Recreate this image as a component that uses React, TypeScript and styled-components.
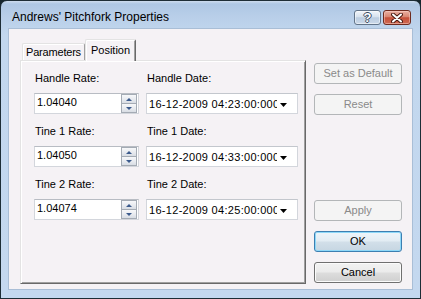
import React from "react";
import styled, { createGlobalStyle, css } from "styled-components";

const GlobalStyle = createGlobalStyle`
  html, body { margin: 0; padding: 0; background: #16262e; }
  body { font-family: "Liberation Sans", Arial, sans-serif; }
  * { box-sizing: border-box; }
`;

const Window = styled.div`
  width: 421px;
  height: 299px;
  border: 1px solid #1d2d36;
  border-radius: 7px 7px 0 0;
  background: linear-gradient(
    180deg,
    #cddcee 0px,
    #aec7e4 3px,
    #b9cfe9 16px,
    #c2d7ee 34px,
    #c4d8ef 100%
  );
  display: flex;
  flex-direction: column;
  overflow: hidden;
`;

const TitleBar = styled.div`
  height: 27px;
  flex: none;
  display: flex;
  align-items: flex-start;
  justify-content: space-between;
  padding: 0 9px 0 11px;
`;

const Title = styled.div`
  margin-top: 9px;
  font-size: 12px;
  line-height: 14px;
  color: #000;
`;

const CaptionButtons = styled.div`
  margin-top: 9px;
  display: flex;
  gap: 2px;
`;

const CaptionButton = styled.div<{ $close?: boolean }>`
  height: 15px;
  width: ${(p) => (p.$close ? 28 : 27)}px;
  border-radius: 3px;
  display: flex;
  align-items: center;
  justify-content: center;
  ${(p) =>
    p.$close
      ? css`
          border: 1px solid #6e2b1f;
          background: linear-gradient(180deg, #eab0a3 0%, #d98672 45%, #c5503a 52%, #cf6a52 100%);
          box-shadow: inset 0 0 0 1px rgba(255, 220, 210, 0.45);
        `
      : css`
          border: 1px solid #627489;
          background: linear-gradient(180deg, #f1f5fa 0%, #d7e2ee 45%, #bccde0 52%, #cbd9ea 100%);
          box-shadow: inset 0 0 0 1px rgba(255, 255, 255, 0.5);
        `}
`;

const HelpGlyph = styled.span`
  font-family: "Liberation Sans", Arial, sans-serif;
  font-weight: bold;
  font-size: 13px;
  line-height: 13px;
  color: #fff;
  text-shadow: 1px 0 #3a4a5d, -1px 0 #3a4a5d, 0 1px #3a4a5d, 0 -1px #3a4a5d;
`;

const Body = styled.div`
  flex: 1;
  display: flex;
  padding: 0 7px 8px 7px;
`;

const Client = styled.div`
  flex: 1;
  display: flex;
  gap: 8px;
  background: #f5f2f5;
  border: 1px solid #a9bed6;
  padding: 9px 10px 5px 11px;
`;

const TabControl = styled.div`
  width: 286px;
  display: flex;
  flex-direction: column;
`;

const TabStrip = styled.div`
  height: 22px;
  flex: none;
  display: flex;
  align-items: flex-end;
  padding-left: 2px;
  position: relative;
  z-index: 1;
`;

const Tab = styled.div<{ $active?: boolean; $w: number }>`
  width: ${(p) => p.$w}px;
  height: ${(p) => (p.$active ? 22 : 17)}px;
  margin-bottom: ${(p) => (p.$active ? -1 : 0)}px;
  background: #f5f2f5;
  border-top: 1px solid #e3e3e3;
  border-left: 1px solid #e3e3e3;
  border-right: 1px solid ${(p) => (p.$active ? "#696969" : "#a0a0a0")};
  border-radius: 2px 2px 0 0;
  box-shadow: ${(p) =>
    p.$active ? "inset 1px 1px #ffffff, inset -1px 0 #a0a0a0" : "inset 1px 1px #ffffff"};
  font-size: 11px;
  line-height: ${(p) => (p.$active ? 20 : 16)}px;
  text-align: center;
  color: #000;
  letter-spacing: ${(p) => (p.$active ? 0 : -0.2)}px;
`;

const TabPanel = styled.div`
  flex: 1;
  border-top: 1px solid #e3e3e3;
  border-left: 1px solid #e3e3e3;
  border-right: 1px solid #696969;
  border-bottom: 1px solid #696969;
  box-shadow: inset 1px 1px #ffffff, inset -1px -1px #a0a0a0;
  padding: 11px 0 0 13px;
`;

const FieldGrid = styled.div`
  display: grid;
  grid-template-columns: 105px 152px;
  column-gap: 7px;
  row-gap: 11px;
`;

const Field = styled.div`
  display: flex;
  flex-direction: column;
  gap: 8px;
`;

const Label = styled.div`
  font-size: 11px;
  line-height: 13px;
  color: #000;
  padding-left: 1px;
  white-space: nowrap;
`;

const SpinBox = styled.div`
  height: 21px;
  display: flex;
  background: #fff;
  border: 1px solid #d3d6dc;
  border-top-color: #b8bcc3;
  padding: 0 1px 0 0;
`;

const SpinText = styled.div`
  flex: 1;
  min-width: 0;
  align-self: flex-start;
  padding-left: 2px;
  font-size: 11px;
  line-height: 16px;
  color: #000;
`;

const Spinner = styled.div`
  width: 16px;
  flex: none;
  display: flex;
  flex-direction: column;
  border: 1px solid #a4abb4;
`;

const SpinButton = styled.div<{ $down?: boolean }>`
  flex: 1;
  display: flex;
  align-items: center;
  justify-content: center;
  background: linear-gradient(180deg, #f7f8fa 0%, #e6e9ee 60%, #d8dde4 100%);
  ${(p) => p.$down && "border-top: 1px solid #a4abb4;"}
`;

const Triangle = styled.span<{ $down?: boolean }>`
  width: 0;
  height: 0;
  border-left: 3px solid transparent;
  border-right: 3px solid transparent;
  ${(p) =>
    p.$down ? "border-top: 3px solid #3b5a8c;" : "border-bottom: 3px solid #3b5a8c;"}
`;

const DateBox = styled.div`
  height: 21px;
  display: flex;
  background: #fff;
  border: 1px solid #d3d6dc;
  border-top-color: #c3c7cd;
`;

const DateText = styled.div`
  flex: 1;
  min-width: 0;
  overflow: hidden;
  white-space: nowrap;
  padding-left: 2px;
  font-size: 11px;
  line-height: 20px;
  letter-spacing: 0.3px;
  color: #000;
`;

const DropArea = styled.div`
  width: 20px;
  flex: none;
  display: flex;
  align-items: center;
  justify-content: center;
  padding: 2px 8px 0 0;
`;

const ButtonColumn = styled.div`
  width: 88px;
  display: flex;
  flex-direction: column;
  padding: 25px 0 1px 0;
`;

const ButtonGroup = styled.div<{ $bottom?: boolean }>`
  display: flex;
  flex-direction: column;
  gap: 10px;
  ${(p) => p.$bottom && "margin-top: auto;"}
`;

const Button = styled.button<{ $default?: boolean }>`
  height: 21px;
  width: 88px;
  padding: 0;
  font-family: "Liberation Sans", Arial, sans-serif;
  font-size: 11px;
  line-height: 19px;
  color: #000;
  border: 1px solid #707070;
  border-radius: 3px;
  background: linear-gradient(180deg, #f2f2f2 0%, #ebebeb 48%, #dddddd 52%, #cfcfcf 100%);
  box-shadow: inset 0 0 0 1px #fbfbfb;
  ${(p) =>
    p.$default &&
    css`
      border-color: #3c7fb1;
      box-shadow: inset 0 0 0 1px #8ed8f8;
      background: linear-gradient(180deg, #eef5fa 0%, #e2ecf3 48%, #d2dfe9 52%, #c6d6e2 100%);
    `}
  &:disabled {
    color: #8a8a8a;
    border-color: #b3b6b8;
    background: #f4f4f4;
    box-shadow: none;
  }
`;

type Row = { rateLabel: string; rate: string; dateLabel: string; date: string };

const rows: Row[] = [
  { rateLabel: "Handle Rate:", rate: "1.04040", dateLabel: "Handle Date:", date: "16-12-2009 04:23:00:000" },
  { rateLabel: "Tine 1 Rate:", rate: "1.04050", dateLabel: "Tine 1 Date:", date: "16-12-2009 04:33:00:000" },
  { rateLabel: "Tine 2 Rate:", rate: "1.04074", dateLabel: "Tine 2 Date:", date: "16-12-2009 04:25:00:000" },
];

const CloseX = () => (
  <svg width="12" height="10" viewBox="0 0 12 10">
    <path d="M2 1.5 L10 8.5 M10 1.5 L2 8.5" stroke="#4a1a12" strokeWidth="4" strokeLinecap="round" />
    <path d="M2 1.5 L10 8.5 M10 1.5 L2 8.5" stroke="#ffffff" strokeWidth="2" strokeLinecap="round" />
  </svg>
);

const DropArrow = () => (
  <svg width="7" height="4" viewBox="0 0 7 4">
    <polygon points="0,0 7,0 3.5,4" fill="#000" />
  </svg>
);

export default function App() {
  return (
    <>
      <GlobalStyle />
      <Window>
        <TitleBar>
          <Title>Andrews' Pitchfork Properties</Title>
          <CaptionButtons>
            <CaptionButton>
              <HelpGlyph>?</HelpGlyph>
            </CaptionButton>
            <CaptionButton $close>
              <CloseX />
            </CaptionButton>
          </CaptionButtons>
        </TitleBar>
        <Body>
          <Client>
            <TabControl>
              <TabStrip>
                <Tab $w={63}>Parameters</Tab>
                <Tab $w={51} $active>
                  Position
                </Tab>
              </TabStrip>
              <TabPanel>
                <FieldGrid>
                  {rows.map((r) => (
                    <React.Fragment key={r.rateLabel}>
                      <Field>
                        <Label>{r.rateLabel}</Label>
                        <SpinBox>
                          <SpinText>{r.rate}</SpinText>
                          <Spinner>
                            <SpinButton>
                              <Triangle />
                            </SpinButton>
                            <SpinButton $down>
                              <Triangle $down />
                            </SpinButton>
                          </Spinner>
                        </SpinBox>
                      </Field>
                      <Field>
                        <Label>{r.dateLabel}</Label>
                        <DateBox>
                          <DateText>{r.date}</DateText>
                          <DropArea>
                            <DropArrow />
                          </DropArea>
                        </DateBox>
                      </Field>
                    </React.Fragment>
                  ))}
                </FieldGrid>
              </TabPanel>
            </TabControl>
            <ButtonColumn>
              <ButtonGroup>
                <Button disabled>Set as Default</Button>
                <Button disabled>Reset</Button>
              </ButtonGroup>
              <ButtonGroup $bottom>
                <Button disabled>Apply</Button>
                <Button $default>OK</Button>
                <Button>Cancel</Button>
              </ButtonGroup>
            </ButtonColumn>
          </Client>
        </Body>
      </Window>
    </>
  );
}
